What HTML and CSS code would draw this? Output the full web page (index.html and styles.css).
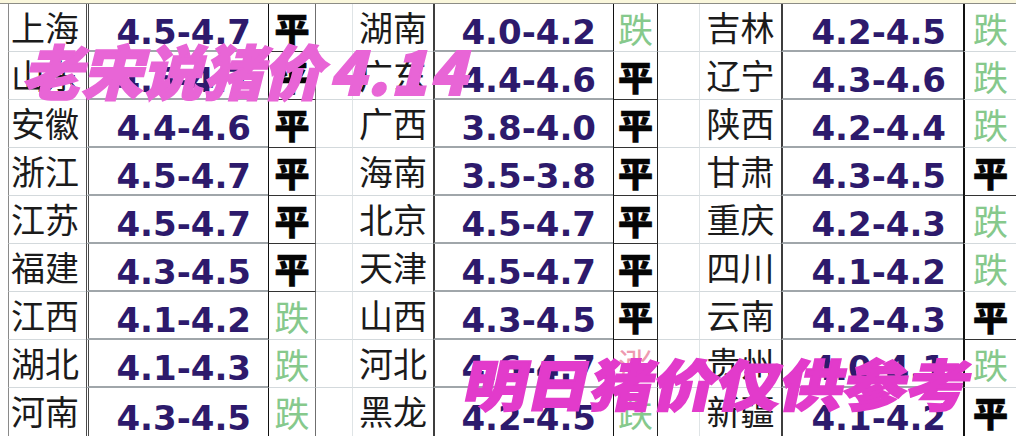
FILE: index.html
```html
<!DOCTYPE html>
<html lang="zh">
<head>
<meta charset="utf-8">
<title>老宋说猪价4.14</title>
<link rel="stylesheet" href="styles.css">
</head>
<body>
<div class="page">
  <div class="topbar"></div>
  <div class="sheet">
    <div class="n g1">上海</div><div class="p g1">4.5-4.7</div><div class="t g1 flat">平</div><div class="s"></div>
    <div class="n g2">湖南</div><div class="p g2">4.0-4.2</div><div class="t g2 down">跌</div><div class="s"></div>
    <div class="n g3">吉林</div><div class="p g3">4.2-4.5</div><div class="t g3 down">跌</div>

    <div class="n g1">山东</div><div class="p g1">4.5-4.7</div><div class="t g1 flat">平</div><div class="s"></div>
    <div class="n g2">广东</div><div class="p g2">4.4-4.6</div><div class="t g2 flat">平</div><div class="s"></div>
    <div class="n g3">辽宁</div><div class="p g3">4.3-4.6</div><div class="t g3 down">跌</div>

    <div class="n g1">安徽</div><div class="p g1">4.4-4.6</div><div class="t g1 flat">平</div><div class="s"></div>
    <div class="n g2">广西</div><div class="p g2">3.8-4.0</div><div class="t g2 flat">平</div><div class="s"></div>
    <div class="n g3">陕西</div><div class="p g3">4.2-4.4</div><div class="t g3 down">跌</div>

    <div class="n g1">浙江</div><div class="p g1">4.5-4.7</div><div class="t g1 flat">平</div><div class="s"></div>
    <div class="n g2">海南</div><div class="p g2">3.5-3.8</div><div class="t g2 flat">平</div><div class="s"></div>
    <div class="n g3">甘肃</div><div class="p g3">4.3-4.5</div><div class="t g3 flat">平</div>

    <div class="n g1">江苏</div><div class="p g1">4.5-4.7</div><div class="t g1 flat">平</div><div class="s"></div>
    <div class="n g2">北京</div><div class="p g2">4.5-4.7</div><div class="t g2 flat">平</div><div class="s"></div>
    <div class="n g3">重庆</div><div class="p g3">4.2-4.3</div><div class="t g3 down">跌</div>

    <div class="n g1">福建</div><div class="p g1">4.3-4.5</div><div class="t g1 flat">平</div><div class="s"></div>
    <div class="n g2">天津</div><div class="p g2">4.5-4.7</div><div class="t g2 flat">平</div><div class="s"></div>
    <div class="n g3">四川</div><div class="p g3">4.1-4.2</div><div class="t g3 down">跌</div>

    <div class="n g1">江西</div><div class="p g1">4.1-4.2</div><div class="t g1 down">跌</div><div class="s"></div>
    <div class="n g2">山西</div><div class="p g2">4.3-4.5</div><div class="t g2 flat">平</div><div class="s"></div>
    <div class="n g3">云南</div><div class="p g3">4.2-4.3</div><div class="t g3 flat">平</div>

    <div class="n g1">湖北</div><div class="p g1">4.1-4.3</div><div class="t g1 down">跌</div><div class="s"></div>
    <div class="n g2">河北</div><div class="p g2">4.6-4.7</div><div class="t g2 up">涨</div><div class="s"></div>
    <div class="n g3">贵州</div><div class="p g3">4.0-4.1</div><div class="t g3 down">跌</div>

    <div class="n g1 last">河南</div><div class="p g1 last">4.3-4.5</div><div class="t g1 down last">跌</div><div class="s last"></div>
    <div class="n g2 last">黑龙</div><div class="p g2 last">4.2-4.5</div><div class="t g2 down last">跌</div><div class="s last"></div>
    <div class="n g3 last">新疆</div><div class="p g3 last">4.1-4.2</div><div class="t g3 flat last">平</div>
  </div>
  <div class="stamp stamp-top">老宋说猪价<span class="stamp-num">4.14</span></div>
  <div class="stamp stamp-bottom">明日猪价仅供参考</div>
</div>
</body>
</html>
```

FILE: styles.css
```css
* { box-sizing: border-box; }

html, body {
  margin: 0;
  padding: 0;
  background: #ffffff;
}

.page {
  position: relative;
  width: 1016px;
  height: 446px;
  overflow: hidden;
  background: #ffffff;
}

.topbar {
  height: 4px;
  background: #faf7dc;
  border-bottom: 1px solid #8d8d86;
}

.sheet {
  margin-left: 8px;
  display: grid;
  grid-template-columns: 78px 182px 48px 36px 81px 180px 45px 41px 82px 182px 53px;
  grid-auto-rows: 48px;
}

.sheet > div {
  border-bottom: 1px solid #d3d9dc;
}

.sheet > div.last {
  border-bottom: none;
}

/* province name */
.n {
  display: flex;
  align-items: center;
  justify-content: center;
  font-family: "Noto Sans CJK SC", "Noto Sans", sans-serif;
  font-size: 34px;
  line-height: 1;
  color: #1b1b1b;
  padding-bottom: 2px;
}

.n.g1 {
  border-left: 1px solid #8a8a8a;
  justify-content: flex-start;
  padding-left: 2px;
}
.n.g2 { border-left: 1px solid #dfe4e6; }
.n.g3 { border-left: 1px solid #dfe4e6; }

/* price range */
.p {
  display: flex;
  align-items: flex-end;
  justify-content: flex-end;
  padding-right: 17px;
  padding-bottom: 1px;
  font-family: "DejaVu Sans", "Verdana", sans-serif;
  font-weight: bold;
  font-size: 34px;
  line-height: 1;
  color: #2d1a6c;
}

.sheet > .p { border-bottom: 2px solid #a0a6aa; }
.sheet > .p.last { border-bottom: none; }

.p.g1 { border-left: 3px double #4a4a4a; }
.p.g2 { border-left: 2px solid #3e3e3e; }
.p.g3 { border-left: 2px solid #3e3e3e; }

/* trend */
.t {
  display: flex;
  align-items: center;
  justify-content: center;
  font-family: "Noto Sans CJK SC", "Noto Sans", sans-serif;
  font-size: 35px;
  line-height: 1;
  border-left: 1px solid #111111;
  padding-bottom: 1px;
}

.t.g1 { border-right: 1px solid #6f6f6f; }
.t.g2 { border-right: 1px solid #222222; }
.t.g3 { border-left-width: 2px; }

.sheet > .t.flat { border-bottom: 1px solid #333333; }
.sheet > .t.last { border-bottom: none; }

.flat {
  font-weight: 900;
  color: #050505;
  -webkit-text-stroke: 0.6px #050505;
}

.down {
  font-weight: 400;
  color: #86c98c;
}

.up {
  font-weight: 400;
  color: #ee9ab0;
}

/* spacer column between groups */
.s { background: #ffffff; }

/* overlaid stamp text */
.stamp {
  position: absolute;
  font-family: "Noto Sans CJK SC", "Noto Sans", sans-serif;
  font-weight: 900;
  line-height: 1;
  white-space: nowrap;
  transform-origin: left center;
}

.stamp-top {
  left: 28px;
  top: 40px;
  font-size: 59px;
  color: #e865d6;
  -webkit-text-stroke: 2px #e865d6;
  transform: skewX(-14deg) scaleX(1.02);
}

.stamp-num {
  letter-spacing: 2px;
  margin-left: 6px;
}

.stamp-bottom {
  left: 466px;
  top: 355px;
  font-size: 55px;
  color: #e23bcb;
  -webkit-text-stroke: 2px #e23bcb;
  transform: skewX(-12deg) scaleX(1.15);
}
```
